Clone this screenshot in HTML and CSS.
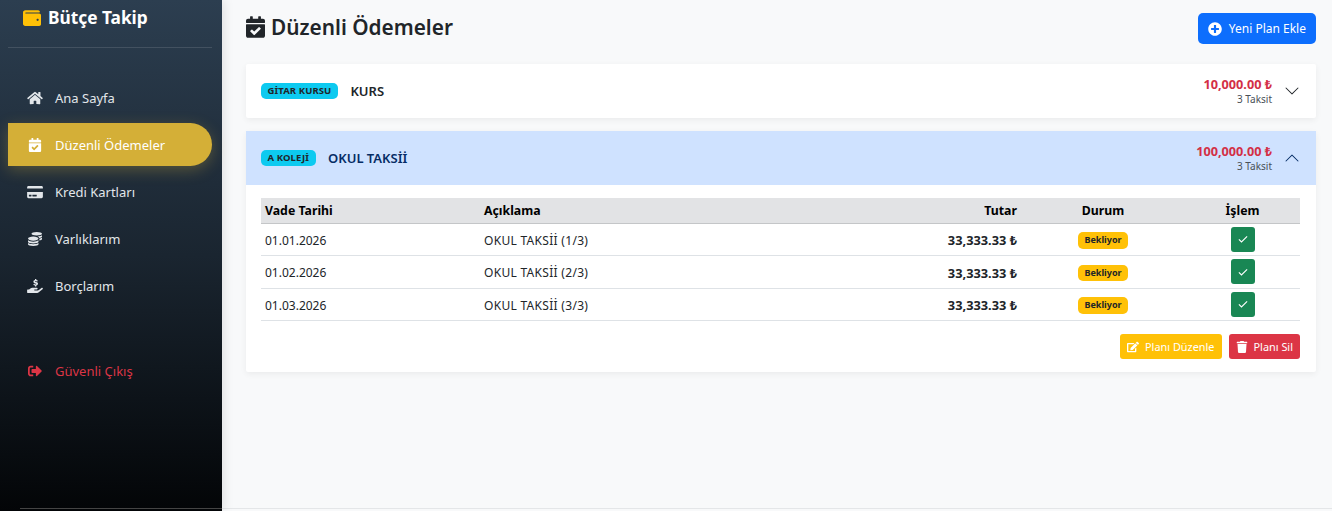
FILE: index.html
```html
<!DOCTYPE html>
<html lang="tr">
<head>
<meta charset="utf-8">
<title>Düzenli Ödemeler</title>
<link rel="stylesheet" href="styles.css">
</head>
<body>
<svg class="defs" width="0" height="0" aria-hidden="true">
<symbol id="i-wallet" viewBox="0 0 512 512"><path d="M461.2 128H80c-8.84 0-16-7.16-16-16s7.16-16 16-16h384c8.84 0 16-7.16 16-16 0-26.51-21.49-48-48-48H64C28.65 32 0 60.65 0 96v320c0 35.35 28.65 64 64 64h397.2c28.02 0 50.8-21.53 50.8-48V176c0-26.47-22.78-48-50.8-48zM416 340c-17.67 0-32-14.33-32-32s14.33-32 32-32 32 14.33 32 32-14.33 32-32 32z"/></symbol>
<symbol id="i-cal" viewBox="0 0 448 512"><path d="M436 160H12c-6.627 0-12-5.373-12-12v-36c0-26.51 21.49-48 48-48h48V12c0-6.627 5.373-12 12-12h40c6.627 0 12 5.373 12 12v52h128V12c0-6.627 5.373-12 12-12h40c6.627 0 12 5.373 12 12v52h48c26.51 0 48 21.49 48 48v36c0 6.627-5.373 12-12 12zM12 192h424c6.627 0 12 5.373 12 12v260c0 26.51-21.49 48-48 48H48c-26.51 0-48-21.49-48-48V204c0-6.627 5.373-12 12-12zm333.296 95.947l-28.169-28.398c-4.667-4.705-12.265-4.736-16.97-.068L194.12 364.665l-45.98-46.352c-4.667-4.705-12.266-4.736-16.971-.068l-28.397 28.17c-4.705 4.667-4.736 12.265-.068 16.97l82.601 83.269c4.667 4.705 12.265 4.736 16.97.068l142.953-141.805c4.705-4.667 4.736-12.265.068-16.97z"/></symbol>
<symbol id="i-home" viewBox="0 0 576 512"><path d="M280.37 148.26L96 300.11V464a16 16 0 0 0 16 16l112.06-.29a16 16 0 0 0 15.92-16V368a16 16 0 0 1 16-16h64a16 16 0 0 1 16 16v95.64a16 16 0 0 0 16 16.05L464 480a16 16 0 0 0 16-16V300L295.67 148.26a12.19 12.19 0 0 0-15.3 0zM571.6 251.47L488 182.56V44.05a12 12 0 0 0-12-12h-56a12 12 0 0 0-12 12v72.61L318.47 43a48 48 0 0 0-61 0L4.34 251.47a12 12 0 0 0-1.6 16.9l25.5 31A12 12 0 0 0 45.15 301l235.22-193.74a12.19 12.19 0 0 1 15.3 0L530.9 301a12 12 0 0 0 16.9-1.6l25.5-31a12 12 0 0 0-1.7-16.93z"/></symbol>
<symbol id="i-card" viewBox="0 0 576 512"><path d="M0 432c0 26.5 21.5 48 48 48h480c26.5 0 48-21.5 48-48V256H0v176zm192-68c0-6.6 5.4-12 12-12h136c6.6 0 12 5.4 12 12v40c0 6.6-5.4 12-12 12H204c-6.6 0-12-5.4-12-12v-40zm-128 0c0-6.6 5.4-12 12-12h72c6.6 0 12 5.4 12 12v40c0 6.6-5.4 12-12 12H76c-6.6 0-12-5.4-12-12v-40zM576 80v48H0V80c0-26.5 21.5-48 48-48h480c26.5 0 48 21.5 48 48z"/></symbol>
<symbol id="i-coins" viewBox="0 0 512 512"><path d="M0 405.3V448c0 35.3 86 64 192 64s192-28.7 192-64v-42.7C342.7 434.4 267.2 448 192 448S41.3 434.4 0 405.3zM320 128c106 0 192-28.7 192-64S426 0 320 0 128 28.7 128 64s86 64 192 64zM0 300.4V352c0 35.3 86 64 192 64s192-28.7 192-64v-51.6c-41.3 34-116.9 51.6-192 51.6S41.3 334.4 0 300.4zm416 11c57.3-11.1 96-31.7 96-55.4v-42.7c-23.2 16.4-57.3 27.6-96 34.5v63.6zM192 160C86 160 0 195.8 0 240s86 80 192 80 192-35.8 192-80-86-80-192-80zm219.3 56.3c60-10.8 100.7-32 100.7-56.3v-42.7c-35.5 25.1-96.5 38.6-160.7 41.8 29.5 14.3 51.2 33.5 60 57.2z"/></symbol>
<symbol id="i-hand" viewBox="0 0 576 512"><path d="M565.27 328.1c-11.8-10.7-30.2-10-42.6 0L430.3 402c-11.3 9.1-25.4 14-40 14H272c-8.8 0-16-7.2-16-16s7.2-16 16-16h78.3c15.9 0 30.7-10.9 33.3-26.6 3.3-20-12.1-37.4-31.6-37.4H192c-27 0-53.1 9.3-74.1 26.3L71.4 384H16c-8.8 0-16 7.2-16 16v96c0 8.8 7.2 16 16 16h356.8c14.5 0 28.6-4.9 40-14L564 377c15.2-12.1 16.4-35.3 1.27-48.9z"/><path d="M288 0h48v36c26 4 46 14 56 26l-30 34c-14-12-34-20-50-20-14 0-20 6-20 14 0 10 14 14 40 22 34 10 66 26 66 66 0 32-24 56-62 62v36h-48v-36c-26-4-50-16-64-32l30-34c14 14 38 26 58 26 16 0 24-6 24-16s-16-16-44-24c-34-10-62-26-62-62 0-30 22-54 58-60z"/></symbol>
<symbol id="i-out" viewBox="0 0 512 512"><path d="M497 273L329 441c-15 15-41 4.5-41-17v-96H152c-13.3 0-24-10.7-24-24v-96c0-13.3 10.7-24 24-24h136V88c0-21.4 25.9-32 41-17l168 168c9.3 9.4 9.3 24.6 0 34zM192 436v-40c0-6.6-5.4-12-12-12H96c-17.7 0-32-14.3-32-32V160c0-17.7 14.3-32 32-32h84c6.6 0 12-5.4 12-12V76c0-6.6-5.4-12-12-12H96c-53 0-96 43-96 96v192c0 53 43 96 96 96h84c6.6 0 12-5.4 12-12z"/></symbol>
<symbol id="i-plus" viewBox="0 0 512 512"><path d="M256 8C119 8 8 119 8 256s111 248 248 248 248-111 248-248S393 8 256 8zm144 276c0 6.6-5.4 12-12 12h-92v92c0 6.6-5.4 12-12 12h-56c-6.6 0-12-5.4-12-12v-92h-92c-6.6 0-12-5.4-12-12v-56c0-6.6 5.4-12 12-12h92v-92c0-6.6 5.4-12 12-12h56c6.6 0 12 5.4 12 12v92h92c6.6 0 12 5.4 12 12v56z"/></symbol>
<symbol id="i-edit" viewBox="0 0 576 512"><path d="M402.6 83.2l90.2 90.2c3.8 3.8 3.8 10 0 13.8L274.4 405.6l-92.8 10.3c-12.4 1.4-22.9-9.1-21.5-21.5l10.3-92.8L388.8 83.2c3.8-3.8 10-3.8 13.8 0zm162-22.9l-48.8-48.8c-15.2-15.2-39.9-15.2-55.2 0l-35.4 35.4c-3.8 3.8-3.8 10 0 13.8l90.2 90.2c3.8 3.8 10 3.8 13.8 0l35.4-35.4c15.2-15.3 15.2-40 0-55.2zM384 346.2V448H64V128h229.8c3.2 0 6.2-1.3 8.5-3.5l40-40c7.6-7.6 2.2-20.5-8.5-20.5H48C21.5 64 0 85.5 0 112v352c0 26.5 21.5 48 48 48h352c26.5 0 48-21.5 48-48V306.2c0-10.7-12.9-16-20.5-8.5l-40 40c-2.2 2.3-3.5 5.3-3.5 8.5z"/></symbol>
<symbol id="i-trash" viewBox="0 0 448 512"><path d="M432 32H312l-9.4-18.7A24 24 0 0 0 281.1 0H166.8a23.72 23.72 0 0 0-21.4 13.3L136 32H16A16 16 0 0 0 0 48v32a16 16 0 0 0 16 16h416a16 16 0 0 0 16-16V48a16 16 0 0 0-16-16zM53.2 467a48 48 0 0 0 47.9 45h245.8a48 48 0 0 0 47.9-45L416 128H32z"/></symbol>
<symbol id="i-check" viewBox="0 0 16 16"><path d="M2.5 8.5l3.5 3.5 7.5-7.5" fill="none" stroke="currentColor" stroke-width="1.5"/></symbol>
<symbol id="i-chev" viewBox="0 0 16 16"><path d="M1.646 4.646a.5.5 0 0 1 .708 0L8 10.293l5.646-5.647a.5.5 0 0 1 .708.708l-6 6a.5.5 0 0 1-.708 0l-6-6a.5.5 0 0 1 0-.708z"/></symbol>
</svg>

<aside class="sidebar">
  <div class="brand"><svg class="brand-icon"><use href="#i-wallet"/></svg><span>Bütçe Takip</span></div>
  <hr class="side-rule">
  <nav class="nav">
    <a class="nav-link"><svg class="nav-icon"><use href="#i-home"/></svg>Ana Sayfa</a>
    <a class="nav-link active"><svg class="nav-icon"><use href="#i-cal"/></svg>Düzenli Ödemeler</a>
    <a class="nav-link"><svg class="nav-icon"><use href="#i-card"/></svg>Kredi Kartları</a>
    <a class="nav-link"><svg class="nav-icon"><use href="#i-coins"/></svg>Varlıklarım</a>
    <a class="nav-link"><svg class="nav-icon"><use href="#i-hand"/></svg>Borçlarım</a>
    <a class="nav-link logout"><svg class="nav-icon"><use href="#i-out"/></svg>Güvenli Çıkış</a>
  </nav>
  <div class="side-foot"></div>
</aside>

<main class="main">
  <header class="page-head">
    <h1 class="page-title"><svg class="title-icon"><use href="#i-cal"/></svg>Düzenli Ödemeler</h1>
    <button class="btn btn-primary"><svg class="btn-icon"><use href="#i-plus"/></svg>Yeni Plan Ekle</button>
  </header>

  <section class="plan">
    <div class="plan-head">
      <span class="tag">GİTAR KURSU</span>
      <span class="plan-name">KURS</span>
      <div class="plan-sum"><strong>10,000.00 ₺</strong><small>3 Taksit</small></div>
      <svg class="chev"><use href="#i-chev"/></svg>
    </div>
  </section>

  <section class="plan open">
    <div class="plan-head">
      <span class="tag">A KOLEJİ</span>
      <span class="plan-name">OKUL TAKSİİ</span>
      <div class="plan-sum"><strong>100,000.00 ₺</strong><small>3 Taksit</small></div>
      <svg class="chev up"><use href="#i-chev"/></svg>
    </div>
    <div class="plan-body">
      <table class="table">
        <thead>
          <tr><th class="c-date">Vade Tarihi</th><th class="c-desc">Açıklama</th><th class="c-amt">Tutar</th><th class="c-mid c-status">Durum</th><th class="c-mid">İşlem</th></tr>
        </thead>
        <tbody>
          <tr><td>01.01.2026</td><td class="desc">OKUL TAKSİİ (1/3)</td><td class="c-amt amt">33,333.33 ₺</td><td class="c-mid"><span class="badge">Bekliyor</span></td><td class="c-mid"><button class="btn-ok"><svg class="ok-icon"><use href="#i-check"/></svg></button></td></tr>
          <tr><td>01.02.2026</td><td class="desc">OKUL TAKSİİ (2/3)</td><td class="c-amt amt">33,333.33 ₺</td><td class="c-mid"><span class="badge">Bekliyor</span></td><td class="c-mid"><button class="btn-ok"><svg class="ok-icon"><use href="#i-check"/></svg></button></td></tr>
          <tr><td>01.03.2026</td><td class="desc">OKUL TAKSİİ (3/3)</td><td class="c-amt amt">33,333.33 ₺</td><td class="c-mid"><span class="badge">Bekliyor</span></td><td class="c-mid"><button class="btn-ok"><svg class="ok-icon"><use href="#i-check"/></svg></button></td></tr>
        </tbody>
      </table>
      <div class="plan-actions">
        <button class="btn btn-sm btn-warning"><svg class="btn-icon-sm"><use href="#i-edit"/></svg>Planı Düzenle</button>
        <button class="btn btn-sm btn-danger"><svg class="btn-icon-sm"><use href="#i-trash"/></svg>Planı Sil</button>
      </div>
    </div>
  </section>
  <div class="main-foot"></div>
</main>
</body>
</html>
```
FILE: styles.css
```css
* { box-sizing: border-box; }
html, body { margin: 0; height: 511px; overflow: hidden; }
body {
  display: flex;
  font-family: "Noto Sans", "Open Sans", sans-serif;
  font-size: 12px;
  color: #212529;
  background: #f8f9fa;
}
.defs { position: absolute; }
svg { fill: currentColor; display: block; flex: none; }

.sidebar {
  width: 222px;
  flex: none;
  display: flex;
  flex-direction: column;
  padding: 0 10px 2px 8px;
  color: #fff;
  background: linear-gradient(180deg, #2c3e50 0%, #1a2530 50%, #030507 100%);
  box-shadow: 2px 0 10px rgba(0,0,0,.1);
  position: relative;
}
.brand { display: flex; align-items: center; gap: 7px; height: 35px; padding-left: 15px; font-size: 17.3px; font-weight: 700; }
.brand-icon { width: 18px; height: 18px; color: #ffc107; }
.side-rule { margin: 12px 0 0; border: 0; border-top: 1px solid rgba(255,255,255,.12); width: 204px; }
.nav { display: flex; flex-direction: column; gap: 4px; margin-top: 28px; flex: 1; }
.nav-link { display: flex; align-items: center; width: 204px; height: 43px; padding-left: 19px; border-radius: 0 25px 25px 0; color: #e2e6ea; font-size: 13px; }
.nav-icon { width: 16px; height: 14px; margin-right: 12px; }
.nav-link.active { background: #d4af37; color: #fff; box-shadow: 0 4px 15px rgba(212,175,55,.3); }
.logout { color: #dc3545; margin-top: 38px; }
.side-foot { margin-left: 12px; margin-right: -10px; border-top: 1px solid #444; }

.main { flex: 1; min-width: 0; display: flex; flex-direction: column; padding: 13px 16px 2px 24px; }
.page-head { display: flex; justify-content: space-between; align-items: flex-start; height: 51px; }
.page-title { display: flex; align-items: center; gap: 6px; margin: 0; height: 27px; font-size: 20.8px; font-weight: 600; }
.title-icon { width: 19px; height: 22px; }

.btn { display: inline-flex; align-items: center; border: 0; border-radius: 5px; color: #fff; font: inherit; }
.btn-primary { height: 31px; padding: 0 10px; background: #0d6efd; font-size: 12px; }
.btn-icon { width: 14px; height: 14px; margin-right: 7px; }

.plan { background: #fff; margin-bottom: 13px; border-radius: 2px; box-shadow: 0 2px 6px rgba(0,0,0,.06); }
.plan-head { display: flex; align-items: center; height: 54px; padding: 0 16px 0 15px; }
.open .plan-head { background: #cfe2ff; color: #052c65; }
.tag { padding: 2px 6.5px; border-radius: 5px; background: #0dcaf0; color: #212529; font-size: 9.5px; font-weight: 700; line-height: 12px; letter-spacing: .1px; }
.plan-name { margin-left: 12.5px; font-size: 13px; font-weight: 600; }
.plan-sum { margin-left: auto; display: flex; flex-direction: column; align-items: flex-end; }
.plan-sum strong { color: #d32f45; font-size: 12.7px; font-weight: 700; line-height: 15px; }
.plan-sum small { color: #495057; font-size: 10px; line-height: 14px; }
.chev { width: 16px; height: 16px; margin-left: 12px; }
.chev.up { transform: rotate(180deg); }

.plan-body { padding: 13px 16px 13px 15px; }
.table { width: 100%; border-collapse: collapse; table-layout: fixed; }
.table th { height: 25px; padding: 0 4px; background: #e2e3e5; color: #000; font-size: 12.3px; font-weight: 700; text-align: left; border-bottom: 1px solid #c4c6c8; }
.table td { height: 32.5px; padding: 2px 4px 0; border-bottom: 1px solid #dee2e6; font-size: 12px; }
.table .c-date { width: 219px; }
.table .c-desc { width: 360px; }
.table .c-amt { width: 181px; text-align: right; }
.table .c-status { width: 164px; }
.table .c-mid { text-align: center; padding-top: 0; }
.table .desc { letter-spacing: .3px; }
.table .amt { font-weight: 700; font-size: 12.8px; }
.badge { display: inline-block; margin-top: 2px; padding: 0 6px; border-radius: 5px; background: #ffc107; color: #212529; font-size: 9px; font-weight: 700; line-height: 16.5px; vertical-align: middle; }
.btn-ok { display: inline-flex; align-items: center; justify-content: center; width: 24px; height: 25px; padding: 0; border: 0; border-radius: 3px; background: #198754; color: #fff; vertical-align: middle; }
.ok-icon { width: 12px; height: 12px; }

.plan-actions { display: flex; justify-content: flex-end; gap: 7px; margin-top: 13px; }
.btn-sm { height: 25px; padding: 0 7px; font-size: 10.9px; border-radius: 3px; }
.btn-icon-sm { width: 12px; height: 12px; margin-right: 6px; }
.btn-warning { background: #ffc107; }
.btn-danger { background: #dc3545; }
.main-foot { margin: auto -16px 0 -24px; border-top: 1px solid #e4e6e8; }
```
